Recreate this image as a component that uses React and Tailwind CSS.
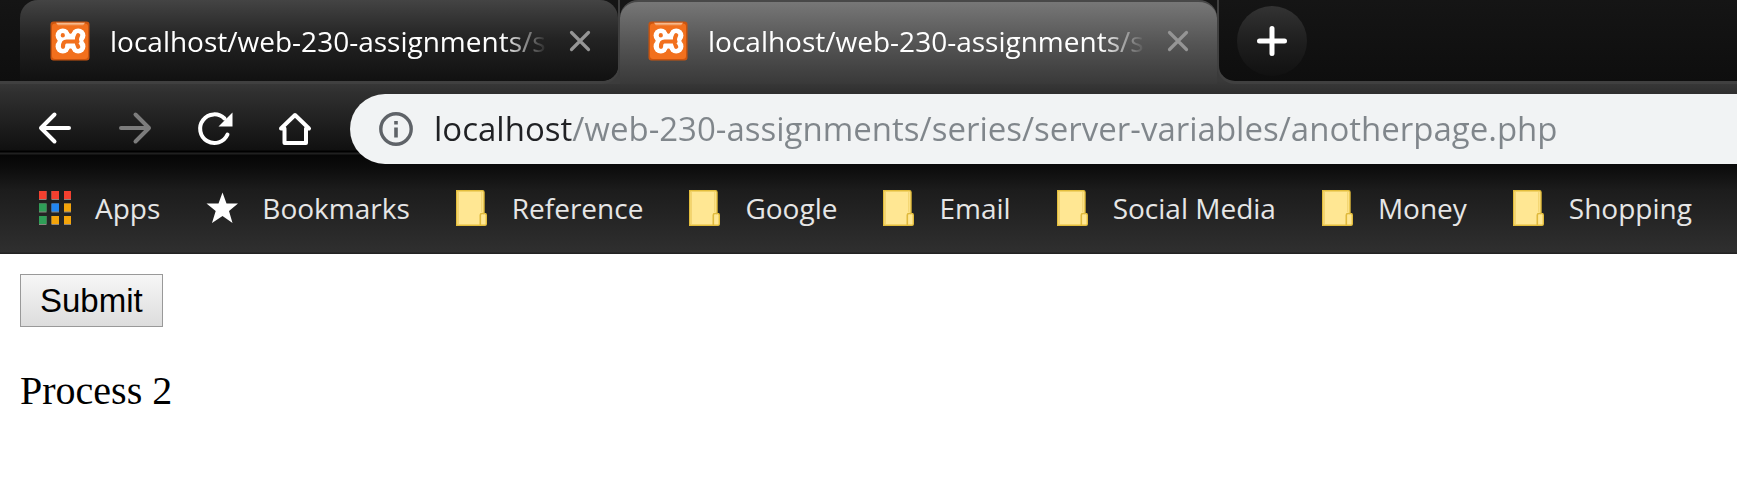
import React from "react";

const URL_TEXT = "localhost/web-230-assignments/series/server-variables/anotherpage.php";
const TAB_TITLE = "localhost/web-230-assignments/s";

function XamppIcon() {
  return (
    <svg className="size-10 shrink-0" viewBox="0 0 40 40" aria-hidden="true">
      <defs>
        <linearGradient id="xamppShine" x1="0" y1="0" x2="0" y2="1">
          <stop offset="0" stopColor="#f9c9a4" />
          <stop offset="1" stopColor="#f08a45" />
        </linearGradient>
      </defs>
      <rect x="0.5" y="0.5" width="39" height="39" rx="3" fill="#c9540f" />
      <rect x="2" y="2.5" width="36" height="35.5" rx="3" fill="#f2701d" />
      <path d="M6 1.8H35L33 4.6H8Z" fill="url(#xamppShine)" />
      <g fill="#fff">
        <circle cx="12.800" cy="14.600" r="7.200" />
        <circle cx="28.200" cy="14.600" r="7.200" />
        <circle cx="12.800" cy="25.400" r="7.200" />
        <circle cx="28.200" cy="25.400" r="7.200" />
        <path d="M12 12.500H29V27.500H12Z" />
      </g>
      <path d="M17.500 6.500H23.500Q22.500 12.500 20.500 12.500Q18.500 12.500 17.500 6.500ZM17.500 33.500H23.500Q22.500 28 20.500 28Q18.500 28 17.500 33.500Z" fill="#f2701d" />
      <path
        d="M12.800 14.200V14.400M13 25.800Q13 20.500 16.500 20.500H27.500M28.200 14.200Q26.500 17 26.800 20Q26.500 23 28.200 25.800"
        fill="none"
        stroke="#f2701d"
        strokeWidth="4.200"
        strokeLinecap="round"
      />
    </svg>
  );
}

function CloseIcon() {
  return (
    <svg className="size-6" viewBox="0 0 24 24" fill="none" stroke="currentColor" strokeWidth="3.200" strokeLinecap="round" aria-hidden="true">
      <path d="M3.500 3.500L20.500 20.500M20.500 3.500L3.500 20.500" />
    </svg>
  );
}

function TabContent({ closeLabel }) {
  return (
    <>
      <XamppIcon />
      <span className="ml-5 min-w-0 flex-1 overflow-hidden whitespace-nowrap text-[28px] leading-10 text-white [mask-image:linear-gradient(to_right,#000_calc(100%-50px),transparent_calc(100%-4px))]">
        {TAB_TITLE}
      </span>
      <button type="button" aria-label={closeLabel} className="ml-4 flex shrink-0 text-[#959595]">
        <CloseIcon />
      </button>
    </>
  );
}

function BackIcon() {
  return (
    <svg className="size-9" viewBox="0 0 36 36" fill="none" stroke="currentColor" strokeWidth="4" strokeLinecap="round" strokeLinejoin="round" aria-hidden="true">
      <path d="M32 17H4M17.500 3.500L4 17L17.500 30.500" />
    </svg>
  );
}

function ForwardIcon() {
  return (
    <svg className="size-9" viewBox="0 0 36 36" fill="none" stroke="currentColor" strokeWidth="4" strokeLinecap="round" strokeLinejoin="round" aria-hidden="true">
      <path d="M4 17H32M18.500 3.500L32 17L18.500 30.500" />
    </svg>
  );
}

function ReloadIcon() {
  return (
    <svg className="size-9" viewBox="0 0 36 36" fill="none" stroke="currentColor" strokeWidth="4" strokeLinecap="round" aria-hidden="true">
      <path d="M30.500 23.500A14.300 14.300 0 1 1 27.500 7.500" />
      <path d="M35.500 1.500V15.500H21.500Z" fill="currentColor" stroke="none" />
    </svg>
  );
}

function HomeIcon() {
  return (
    <svg className="size-9" viewBox="0 0 36 36" fill="none" stroke="currentColor" strokeWidth="4" strokeLinecap="round" strokeLinejoin="round" aria-hidden="true">
      <path d="M4 17.500L18 4L32 17.500H29V32H7.500V17.500Z" />
    </svg>
  );
}

function InfoIcon() {
  return (
    <svg className="size-9 shrink-0" viewBox="0 0 36 36" aria-hidden="true">
      <circle cx="18" cy="18" r="15.200" fill="none" stroke="#5f6368" strokeWidth="3.400" />
      <path d="M16.200 10H19.800V13.400H16.200ZM16.200 16.400H19.800V26.400H16.200Z" fill="#5f6368" />
    </svg>
  );
}

function AppsIcon() {
  const colors = ["#f4402f", "#f4402f", "#f4402f", "#2f9e57", "#2286f0", "#f4a40a", "#2f9e57", "#f4a40a", "#f4a40a"];
  return (
    <svg className="h-9 w-8 shrink-0" viewBox="0 0 32 36" aria-hidden="true">
      {colors.map((color, i) => (
        <g key={i}>
          <rect x={(i % 3) * 12.500} y={1 + Math.floor(i / 3) * 12.500} width="7.500" height="9" fill="#8b8580" />
          <rect x={(i % 3) * 12.500} y={1 + Math.floor(i / 3) * 12.500} width="7.500" height="8" fill={color} />
        </g>
      ))}
    </svg>
  );
}

function StarIcon() {
  return (
    <svg className="h-9 w-8 shrink-0" viewBox="0 0 32 36" aria-hidden="true">
      <path d="M16.500 2.500L20.500 13.500H32L23 21L26.500 33L16.500 26L6 33L9.700 21L0.500 13.500H12.500Z" fill="#fff" />
    </svg>
  );
}

function FolderIcon() {
  return (
    <svg className="h-9 w-8 shrink-0" viewBox="0 0 32 36" aria-hidden="true">
      <path d="M0.700 0.700H26.500Q28 0.700 28 2.200V23.500H28.600Q30.300 23.500 30.300 25V34Q30.300 35.300 29 35.300H0.700Z" fill="#ffe793" stroke="#e3bd3c" strokeWidth="1.400" />
      <path d="M28 23.500H26Q24.300 23.500 24.300 25V35" fill="none" stroke="#dfb93d" strokeWidth="1.600" />
      <path d="M25.800 2V22M2.300 2V34" stroke="#f0d069" strokeWidth="1" />
    </svg>
  );
}

const BOOKMARKS = [
  { label: "Apps", icon: AppsIcon },
  { label: "Bookmarks", icon: StarIcon },
  { label: "Reference", icon: FolderIcon },
  { label: "Google", icon: FolderIcon },
  { label: "Email", icon: FolderIcon },
  { label: "Social Media", icon: FolderIcon },
  { label: "Money", icon: FolderIcon },
  { label: "Shopping", icon: FolderIcon },
];

function TabStrip() {
  return (
    <div className="flex h-[84px]">
      <div className="flex min-w-0 shrink bg-linear-to-b from-[#151515] from-50% to-[#3c3c3c] to-50%">
        <div className="flex min-w-0 overflow-hidden rounded-br-[18px] border-r-2 border-b-3 border-[#404040] bg-linear-to-b from-[#151515] to-[#0e0e0e] pl-5">
          <div className="flex w-[598px] min-w-0 items-center rounded-t-[18px] bg-linear-to-b from-[#444] via-[#222] to-[#111] pr-[26px] pl-[30px]">
            <TabContent closeLabel="Close first tab" />
          </div>
        </div>
      </div>
      <div className="flex min-w-0 shrink bg-[#151515]">
        <div className="flex w-[597px] min-w-0 items-center rounded-t-[18px] border-t-2 border-[#484848] bg-linear-to-b from-[#777] via-[#555] to-[#393939] pr-[27px] pb-1 pl-7">
          <TabContent closeLabel="Close second tab" />
        </div>
      </div>
      <div className="flex flex-1 items-center rounded-bl-[18px] border-b-3 border-l-2 border-[#404040] bg-linear-to-b from-[#151515] to-[#0e0e0e] pl-[18px]">
        <button
          type="button"
          aria-label="New tab"
          className="flex size-[70px] shrink-0 items-center justify-center rounded-full bg-linear-to-b from-[#333] via-[#1f1f1f] to-[#111] text-white"
        >
          <svg className="size-8" viewBox="0 0 32 32" stroke="currentColor" strokeWidth="5" strokeLinecap="round" aria-hidden="true">
            <path d="M16 3.500V28.500M3.500 16H28.500" />
          </svg>
        </button>
      </div>
    </div>
  );
}

function Toolbar() {
  return (
    <div className="flex items-center pt-[10px] pl-[37px]">
      <div className="flex gap-11 text-white">
        <button type="button" aria-label="Back"><BackIcon /></button>
        <button type="button" aria-label="Forward" className="text-[#7c7c7c]"><ForwardIcon /></button>
        <button type="button" aria-label="Reload"><ReloadIcon /></button>
        <button type="button" aria-label="Home"><HomeIcon /></button>
      </div>
      <div className="ml-[37px] flex h-[70px] flex-1 items-center rounded-l-full bg-[#f1f3f4] pl-7">
        <InfoIcon />
        <input
          type="text"
          aria-label="Address"
          defaultValue={URL_TEXT}
          className="ml-5 h-12 min-w-0 flex-1 bg-[linear-gradient(to_right,#202124_138px,#80868b_138px)] bg-clip-text text-[33px] text-transparent caret-[#202124] outline-none"
        />
      </div>
    </div>
  );
}

function BookmarksBar() {
  return (
    <nav aria-label="Bookmarks" className="flex h-[90px] items-center gap-[46px] overflow-hidden pb-0.5 pl-[39px]">
      {BOOKMARKS.map(({ label, icon: Icon }) => (
        <a key={label} href="#" className="flex shrink-0 items-center gap-6 text-[28px] leading-10 whitespace-nowrap text-[#e6e6e6]">
          <Icon />
          {label}
        </a>
      ))}
    </nav>
  );
}

export default function App() {
  return (
    <div className="min-h-screen bg-white font-['Open_Sans','Noto_Sans',sans-serif]">
      <header className="bg-[linear-gradient(#3c3c3c_0,#3a3a3a_80px,#303030_92px,#101010_150px,#000_151px,#000_152px,#202020_153px,#202020_154px,#060606_155px,#0b0b0b_166px,#1c1c1c_190px,#2f2f2f_252px,#222_253px)]">
        <TabStrip />
        <Toolbar />
        <BookmarksBar />
      </header>
      <main className="px-5 pt-5">
        <form onSubmit={(event) => event.preventDefault()}>
          <button
            type="submit"
            className="flex h-[53px] items-center border border-[#999] bg-linear-to-b from-[#f6f6f6] to-[#dddddd] px-[19px] font-['Liberation_Sans',Arial,sans-serif] text-[33px] leading-10 text-black"
          >
            Submit
          </button>
        </form>
        <p className="mt-10 font-['Liberation_Serif','Times_New_Roman',serif] text-[40px] leading-12 text-black">Process 2</p>
      </main>
    </div>
  );
}
